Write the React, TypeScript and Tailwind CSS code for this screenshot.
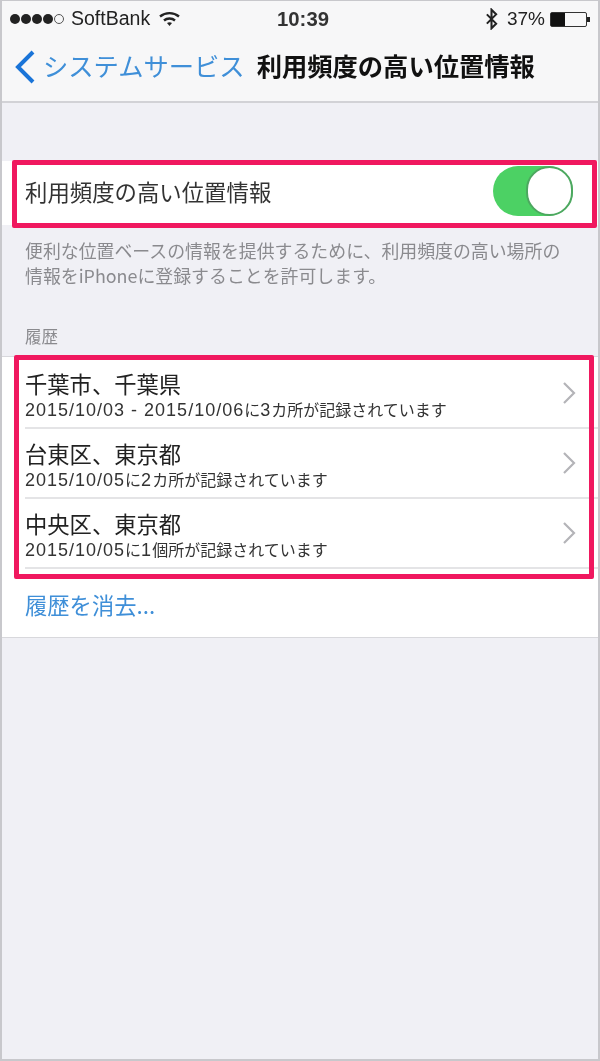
const jp = { fontFamily: '"Noto Sans CJK JP", "Liberation Sans", sans-serif' };
const latin = { fontFamily: '"Liberation Sans", sans-serif' };
const mixed = { fontFamily: '"Liberation Sans", "Noto Sans CJK JP", sans-serif' };

function Sub({ text }: { text: string }) {
  const parts = text.match(/[0-9/ \-]+|[^0-9/ \-]+/g) ?? [];
  return (
    <div className="text-[16px] leading-[23px] text-[#333] whitespace-nowrap" style={mixed}>
      {parts.map((p, i) =>
        /^[0-9/ \-]+$/.test(p) ? (
          <span key={i} className="text-[18px] tracking-[1px] whitespace-pre">{p}</span>
        ) : (
          <span key={i}>{p}</span>
        )
      )}
    </div>
  );
}

function Row({ title, sub }: { title: string; sub: string }) {
  return (
    <div className="h-[68px] flex items-center pl-[23px] pr-[21px]">
      <div className="flex-1 pt-[8px]">
        <div className="text-[22.3px] leading-[26px] text-[#222]" style={mixed}>{title}</div>
        <Sub text={sub} />
      </div>
      <svg width="16" height="24" viewBox="0 0 16 24" fill="none" stroke="#b4b4b8" strokeWidth="2.2">
        <path d="M3 2l10 10L3 22" />
      </svg>
    </div>
  );
}

export default function App() {
  return (
    <div className="relative w-[600px] h-[1061px] overflow-hidden bg-[#f0f0f5] border-l-2 border-r-2 border-t border-b-2 border-[#c8c8cc] blur-[0.5px]" style={jp}>
      <div className="h-[102px] bg-[#f7f7f8] border-b-2 border-[#d2d2d6]">
        <div className="h-[36px] flex items-center justify-between text-[#222] pl-[8px] pr-[8px] text-[19.5px]" style={latin}>
          <div className="flex items-center w-[200px]">
            <div className="flex gap-[1px] items-center">
              <span className="w-[10px] h-[10px] rounded-full bg-[#222]" />
              <span className="w-[10px] h-[10px] rounded-full bg-[#222]" />
              <span className="w-[10px] h-[10px] rounded-full bg-[#222]" />
              <span className="w-[10px] h-[10px] rounded-full bg-[#222]" />
              <span className="w-[10px] h-[10px] rounded-full border border-[#555]" />
            </div>
            <span className="ml-[7px]">SoftBank</span>
            <svg className="ml-[9px]" width="21" height="16" viewBox="0 0 21 16" fill="none" stroke="#222" strokeWidth="2.4">
              <path d="M1 5.5c5.5-4.500 13.500-4.500 19 0" />
              <path d="M5 9.500c3-2.600 8-2.600 11 0" />
              <path d="M10.500 15l-2.500-3c1.500-1 3.500-1 5 0z" fill="#222" stroke="none" />
            </svg>
          </div>
          <span className="text-[20.3px] font-bold ml-[6px] text-[#333]">10:39</span>
          <div className="flex items-center justify-end w-[200px]">
            <svg width="13" height="22" viewBox="0 0 14 22" fill="none" stroke="#222" strokeWidth="2.2">
              <path d="M2 6l10 10-5 5V1l5 5L2 16" />
            </svg>
            <span className="ml-[9px] mr-[5px] text-[19px]">37%</span>
            <div className="w-[37px] h-[15px] border border-[#333] rounded-[2px]">
              <div className="w-[14px] h-full bg-[#111]" />
            </div>
            <div className="w-[3px] h-[5px] bg-[#222]" />
          </div>
        </div>
        <div className="h-[57px] flex items-center pl-[12px]">
          <svg className="mt-[3px]" width="22" height="34" viewBox="0 0 22 34" fill="none" stroke="#1a74d8" strokeWidth="4">
            <path d="M19 2L4 17l15 15" />
          </svg>
          <span className="ml-[7px] text-[25.3px] text-[#3f8fd8] leading-none">システムサービス</span>
          <span className="ml-[12px] text-[25.3px] font-bold text-[#111] leading-none">利用頻度の高い位置情報</span>
        </div>
      </div>

      <div className="h-[58px]" />
      <div className="h-[64px] bg-white flex items-center pl-[23px] pr-[25px] pb-[4px] justify-between">
        <span className="text-[22.4px] text-[#333] leading-none">利用頻度の高い位置情報</span>
        <div className="relative w-[80px] h-[50px] rounded-full bg-[#4cd164]">
          <div className="absolute right-0 top-0 w-[47px] h-[50px] rounded-full bg-white border-2 border-[#4da860]" />
        </div>
      </div>

      <div className="pl-[23px] pt-[13px] text-[17.9px] leading-[25px] text-[#8a8a8e]">
        <div>便利な位置ベースの情報を提供するために、利用頻度の高い場所の</div>
        <div>情報をiPhoneに登録することを許可します。</div>
      </div>
      <div className="pl-[23px] mt-[36px] h-[32px] text-[16.5px] leading-[24px] text-[#8a8a8e]">履歴</div>

      <div className="bg-white border-y border-[#d8d8dc] pt-[2px]">
        <Row title="千葉市、千葉県" sub="2015/10/03 - 2015/10/06に3カ所が記録されています" />
        <div className="ml-[23px] h-[2px] bg-[#e4e4e6]" />
        <Row title="台東区、東京都" sub="2015/10/05に2カ所が記録されています" />
        <div className="ml-[23px] h-[2px] bg-[#e4e4e6]" />
        <Row title="中央区、東京都" sub="2015/10/05に1個所が記録されています" />
        <div className="ml-[23px] h-[2px] bg-[#e4e4e6]" />
        <div className="h-[68px] flex items-center pl-[23px] pt-[4px] text-[22.3px] text-[#3f8fd8]">履歴を消去...</div>
      </div>

      <div className="absolute left-[10px] top-[159px] w-[585px] h-[68px] border-[5px] border-[#f0185f] rounded-[2px]" />
      <div className="absolute left-[12px] top-[354px] w-[580px] h-[224px] border-[5px] border-[#f0185f] rounded-[2px]" />
    </div>
  );
}
